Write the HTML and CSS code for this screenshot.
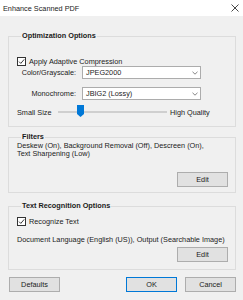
FILE: index.html
```html
<!DOCTYPE html>
<html lang="en">
<head>
    <meta charset="UTF-8">
    <title>Enhance Scanned PDF</title>
    <link rel="stylesheet" href="styles.css">
</head>
<body>
    <div class="dialog">
        <div class="titlebar">
            <span class="title">Enhance Scanned PDF</span>
            <svg class="close" width="8" height="8" viewBox="0 0 8 8"><path d="M0.5 0.5 L7.5 7.5 M7.5 0.5 L0.5 7.5" stroke="#333" stroke-width="0.9" fill="none"/></svg>
        </div>
        <div class="content">
            <fieldset class="group group-opt">
                <legend>Optimization Options</legend>
                <label class="check">
                    <span class="box"><svg width="7" height="7" viewBox="0 0 7 7"><path d="M1 3.6 L2.8 5.4 L6.2 1.4" stroke="#222" stroke-width="0.9" fill="none"/></svg></span>
                    Apply Adaptive Compression
                </label>
                <div class="fields">
                    <span class="lbl">Color/Grayscale:</span>
                    <div class="select">JPEG2000<svg class="arrow" width="6" height="4" viewBox="0 0 6 4"><path d="M0.5 0.8 L3 3.2 L5.5 0.8" stroke="#666" stroke-width="0.8" fill="none"/></svg></div>
                    <span class="lbl">Monochrome:</span>
                    <div class="select">JBIG2 (Lossy)<svg class="arrow" width="6" height="4" viewBox="0 0 6 4"><path d="M0.5 0.8 L3 3.2 L5.5 0.8" stroke="#666" stroke-width="0.8" fill="none"/></svg></div>
                </div>
                <div class="slider-row">
                    <span class="small">Small Size</span>
                    <div class="track">
                        <svg class="thumb" width="7" height="12" viewBox="0 0 7 12"><path d="M0 0 H7 V9 L3.5 12 L0 9 Z" fill="#0078d7"/></svg>
                    </div>
                    <span class="high">High Quality</span>
                </div>
            </fieldset>

            <fieldset class="group group-filters">
                <legend>Filters</legend>
                <p class="desc">Deskew (On), Background Removal (Off), Descreen (On), Text Sharpening (Low)</p>
                <div class="actions"><button class="btn">Edit</button></div>
            </fieldset>

            <fieldset class="group group-ocr">
                <legend>Text Recognition Options</legend>
                <label class="check">
                    <span class="box"><svg width="7" height="7" viewBox="0 0 7 7"><path d="M1 3.6 L2.8 5.4 L6.2 1.4" stroke="#222" stroke-width="0.9" fill="none"/></svg></span>
                    Recognize Text
                </label>
                <p class="desc single">Document Language (English (US)), Output (Searchable Image)</p>
                <div class="actions"><button class="btn">Edit</button></div>
            </fieldset>

            <div class="footer">
                <button class="btn">Defaults</button>
                <div class="right">
                    <button class="btn primary">OK</button>
                    <button class="btn">Cancel</button>
                </div>
            </div>
        </div>
    </div>
</body>
</html>
```

FILE: styles.css
```css
body {
    margin: 0;
    background-color: #f0f0f0;
    font-family: "Liberation Sans", Arial, sans-serif;
    font-size: 7.3px;
    color: #1b1b1b;
}
.dialog {
    width: 243px;
    height: 300px;
}
.titlebar {
    height: 16px;
    background-color: #ffffff;
    display: flex;
    align-items: center;
    justify-content: space-between;
    padding: 0 4px 0 3px;
    box-sizing: border-box;
}
.close {
    display: block;
}
.content {
    padding: 15px 7px 0 8px;
}
.group {
    margin: 0;
    border: 1px solid #dcdcdc;
    padding: 0 0 0 8px;
    min-width: 0;
    box-sizing: border-box;
}
.group legend {
    font-weight: bold;
    line-height: 10px;
    padding: 0 1px;
    margin-left: 4px;
}
.check {
    display: flex;
    align-items: center;
    height: 10px;
    gap: 3px;
}
.box {
    width: 7px;
    height: 7px;
    border: 1px solid #333;
    background: #fff;
    display: flex;
}
.group-opt {
    height: 96px;
}
.group-opt .check {
    margin-top: 15px;
}
.fields {
    display: grid;
    grid-template-columns: 59px 119px;
    column-gap: 6px;
    row-gap: 8px;
    align-items: center;
}
.lbl {
    text-align: right;
}
.select {
    height: 13px;
    box-sizing: border-box;
    border: 1px solid #acacac;
    background: #fff;
    display: flex;
    align-items: center;
    justify-content: space-between;
    padding: 0 2px 0 3px;
}
.slider-row {
    display: flex;
    align-items: center;
    height: 12px;
    margin-top: 6px;
}
.small {
    width: 41px;
}
.track {
    width: 109px;
    height: 2px;
    background: #cfcfcf;
    position: relative;
    margin-right: 3px;
}
.thumb {
    position: absolute;
    left: 19px;
    top: -6px;
}
.group-filters {
    margin-top: 5px;
    height: 61px;
}
.desc {
    margin: 0;
    line-height: 8.3px;
    max-width: 200px;
}
.actions {
    display: flex;
    justify-content: flex-end;
    padding-right: 7px;
}
.btn {
    font-family: inherit;
    font-size: 7.3px;
    color: #1b1b1b;
    background-color: #e1e1e1;
    border: 1px solid #adadad;
    width: 51px;
    height: 15px;
    padding: 0;
}
.group-filters .btn {
    margin-top: 13px;
}
.group-ocr {
    margin-top: 8px;
    height: 69px;
}
.group-ocr .check {
    margin-top: 5px;
}
.desc.single {
    margin-top: 10px;
    max-width: none;
}
.group-ocr .btn {
    margin-top: 3px;
}
.footer {
    display: flex;
    justify-content: space-between;
    margin-top: 7px;
    padding-left: 1px;
}
.footer .right {
    display: flex;
    gap: 8px;
}
.primary {
    border-color: #0078d7;
}
```
